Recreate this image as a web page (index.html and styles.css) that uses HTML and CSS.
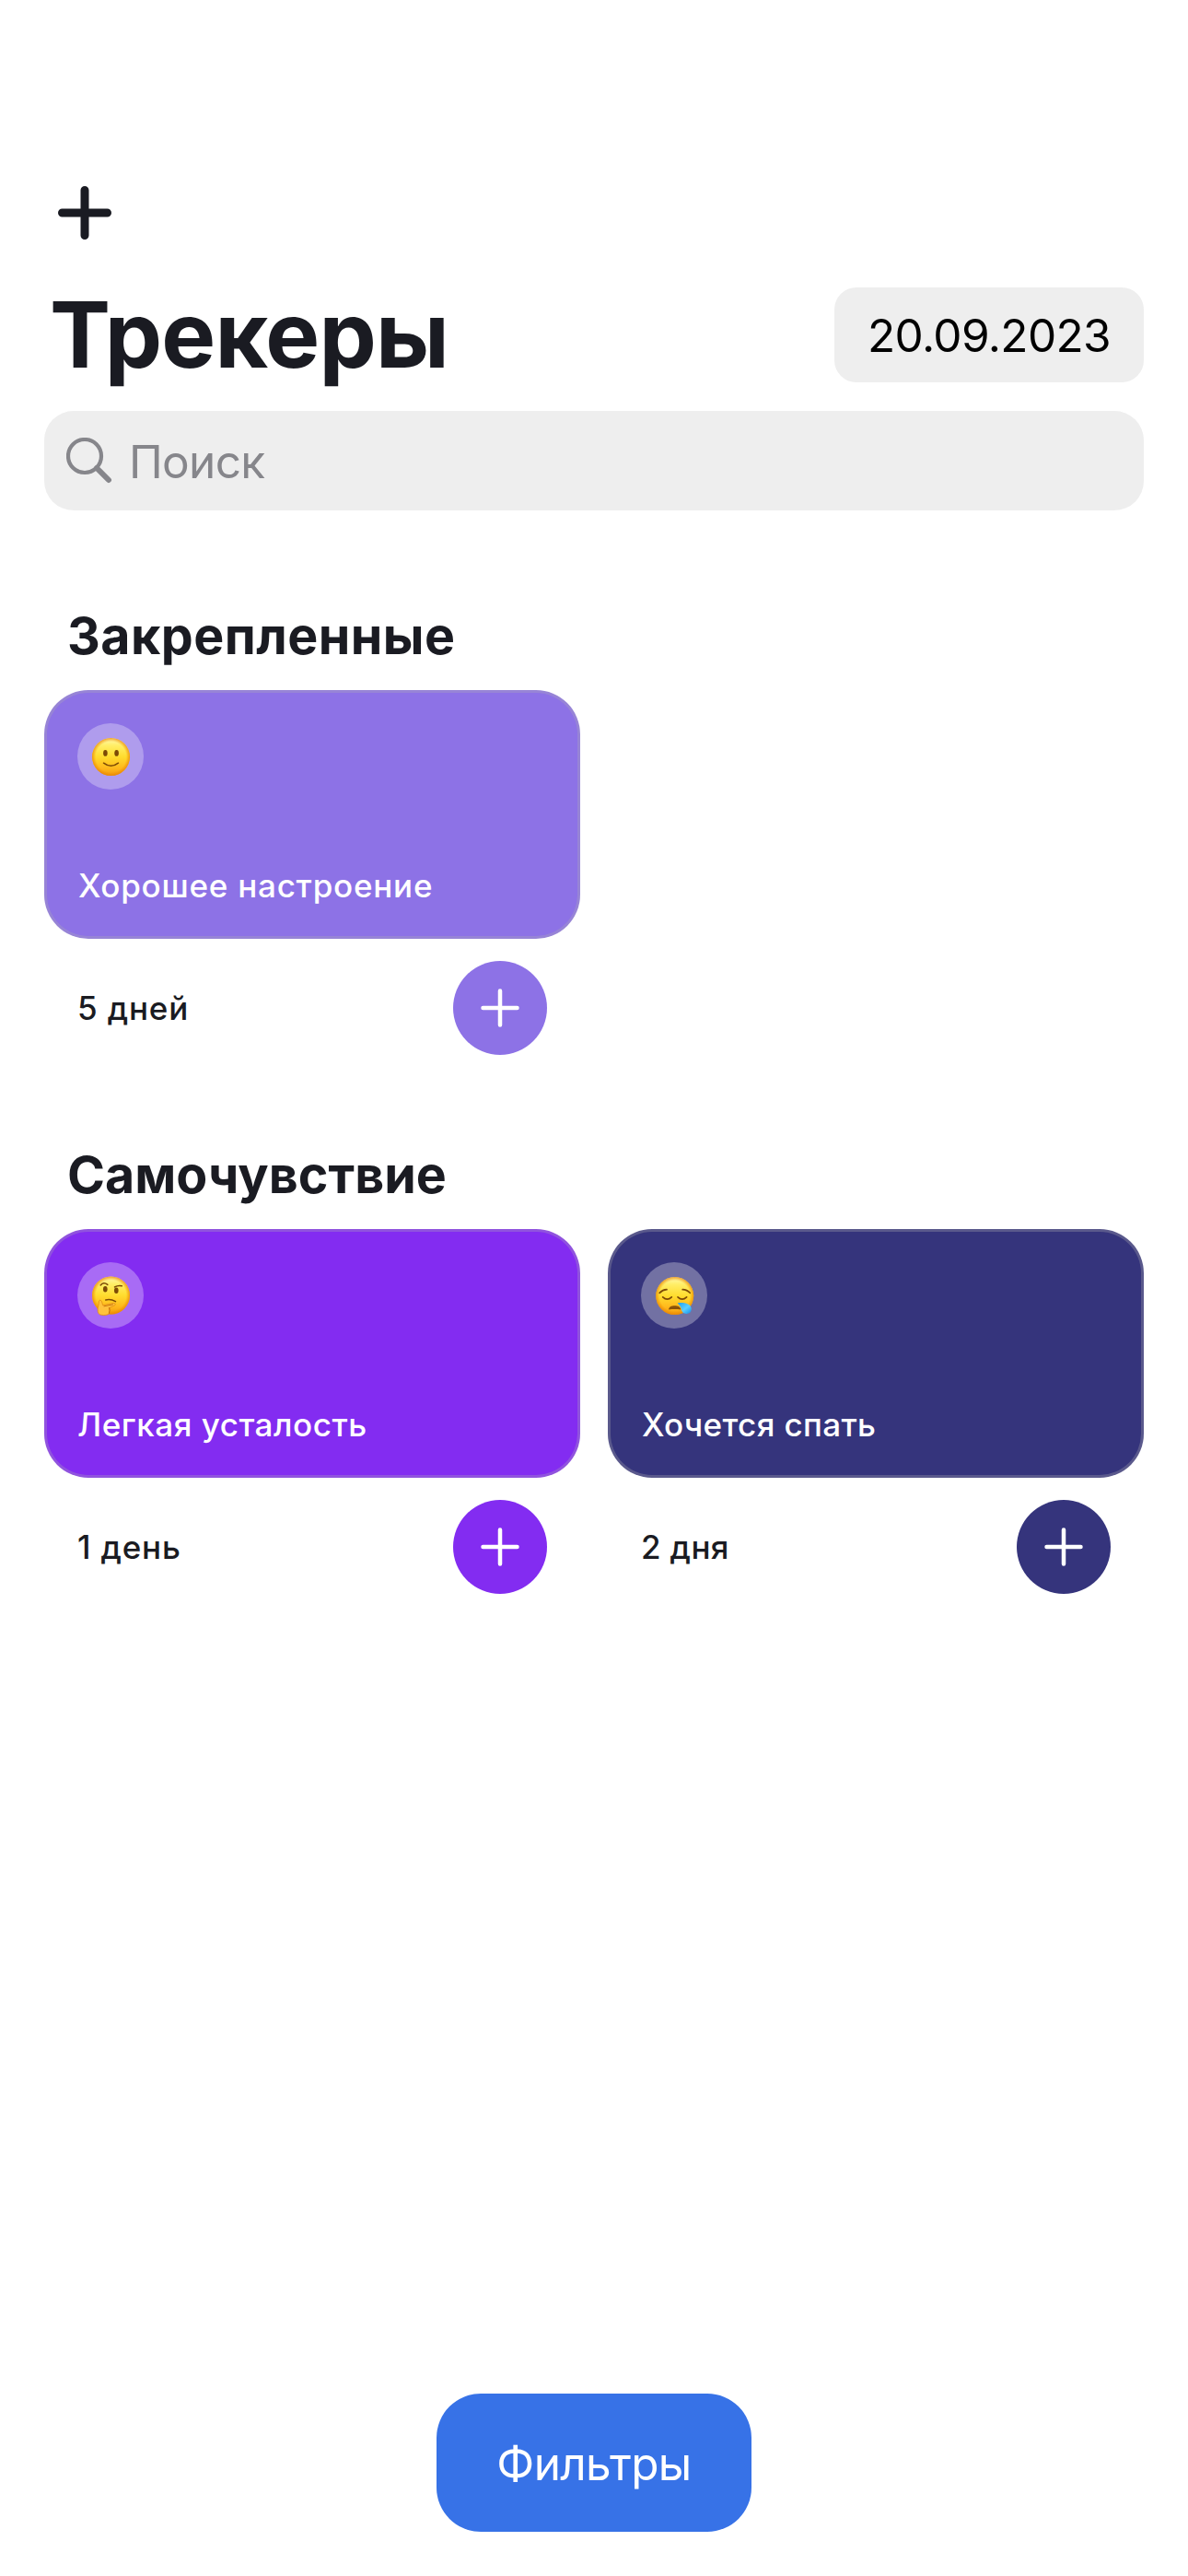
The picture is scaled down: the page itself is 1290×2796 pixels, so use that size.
FILE: index.html
```html
<!DOCTYPE html>
<html lang="ru">
<head>
<meta charset="utf-8">
<title>Трекеры</title>
<link rel="stylesheet" href="styles.css">
</head>
<body>
<main class="screen">
  <header class="header">
    <button class="add" aria-label="Добавить">
      <svg width="58" height="58" viewBox="0 0 58 58"><path d="M29 4.500v49M4.500 29h49" stroke="currentColor" stroke-width="9" stroke-linecap="round"/></svg>
    </button>
    <div class="title-row">
      <h1 class="title">Трекеры</h1>
      <div class="date">20.09.2023</div>
    </div>
    <div class="search">
      <svg width="50" height="50" viewBox="0 0 50 50" fill="none" stroke="currentColor"><circle cx="20" cy="20" r="18" stroke-width="4.200"/><path d="M33 33L46 46" stroke-width="6" stroke-linecap="round"/></svg>
      <span class="placeholder">Поиск</span>
    </div>
  </header>

  <section class="section pinned">
    <h2 class="section-title">Закрепленные</h2>
    <div class="grid">
      <article class="tracker lavender">
        <div class="card">
          <svg class="emoji" viewBox="0 0 72 72" fill="none">
            <defs>
              <linearGradient id="face" x1="0" y1="0" x2="0" y2="1"><stop offset="0" stop-color="#fff9b0"/><stop offset=".2" stop-color="#ffee66"/><stop offset=".5" stop-color="#ffdc2e"/><stop offset=".8" stop-color="#ffb81c"/><stop offset="1" stop-color="#f09a10"/></linearGradient>
              <radialGradient id="rim"><stop offset=".8" stop-color="#f08c00" stop-opacity="0"/><stop offset="1" stop-color="#e88300" stop-opacity=".75"/></radialGradient>
            </defs>
            <circle cx="36.500" cy="36.500" r="20.500" fill="url(#face)"/><circle cx="36.500" cy="36.500" r="20.500" fill="url(#rim)"/>
            <g fill="#7c4a06"><ellipse cx="30.400" cy="32.400" rx="2.300" ry="3.400"/><ellipse cx="42.600" cy="32.400" rx="2.300" ry="3.400"/></g>
            <path d="M28.500 43.200Q36.500 49.500 44.500 43.200" stroke="#7c4a06" stroke-width="1.500" stroke-linecap="round"/>
          </svg>
          <p class="name">Хорошее настроение</p>
        </div>
        <div class="footer"><span class="days">5 дней</span>
          <button class="plus" aria-label="Отметить"><svg width="42" height="42" viewBox="0 0 42 42"><path d="M21 2.500v37M2.500 21h37" stroke="#fff" stroke-width="4.500" stroke-linecap="round"/></svg></button>
        </div>
      </article>
    </div>
  </section>

  <section class="section">
    <h2 class="section-title">Самочувствие</h2>
    <div class="grid">
      <article class="tracker violet">
        <div class="card">
          <svg class="emoji" viewBox="0 0 72 72" fill="none">
            <circle cx="36.500" cy="36" r="20.500" fill="url(#face)"/><circle cx="36.500" cy="36" r="20.500" fill="url(#rim)"/>
            <g fill="#7c4a06"><ellipse cx="30.300" cy="29.300" rx="2.300" ry="3.300"/><ellipse cx="42.300" cy="30.700" rx="2.300" ry="3.200"/></g>
            <g stroke="#7c4a06" stroke-width="1.500" stroke-linecap="round"><path d="M25.200 25Q28.500 20.800 32.800 24.400"/><path d="M40.500 27Q44 25 48.300 25.800"/><path d="M30.800 41Q36 39.600 41.500 42.600"/></g>
            <path d="M24 41.500C25.800 40.300 26.800 43 27.600 46.700C31 46.400 36 44.600 39.600 44.500C41.800 44.500 41.600 46.600 39.800 47.200L35.200 49.200C36.200 51.500 35.600 55.500 33.300 56.700C30.600 57.800 26.600 57.800 24.300 56.800C21.800 55.600 22 51.500 22.300 49.500C22.600 47 23.500 45.500 23.300 42.800Z" fill="#ffc23d" stroke="#e08a10" stroke-width=".8"/>
            <path d="M29 47.800L38.500 45.900M34.500 49.500Q35.500 52 34.400 55.500" stroke="#c26a08" stroke-width=".9" stroke-linecap="round"/>
          </svg>
          <p class="name">Легкая усталость</p>
        </div>
        <div class="footer"><span class="days">1 день</span>
          <button class="plus" aria-label="Отметить"><svg width="42" height="42" viewBox="0 0 42 42"><path d="M21 2.500v37M2.500 21h37" stroke="#fff" stroke-width="4.500" stroke-linecap="round"/></svg></button>
        </div>
      </article>
      <article class="tracker indigo">
        <div class="card">
          <svg class="emoji" viewBox="0 0 72 72" fill="none">
            <defs><linearGradient id="tear" x1="0" y1="0" x2="1" y2="1"><stop offset="0" stop-color="#1d9ff0"/><stop offset=".55" stop-color="#5ccfff"/><stop offset="1" stop-color="#0f8fe8"/></linearGradient></defs>
            <circle cx="36.700" cy="36.500" r="20.500" fill="url(#face)"/><circle cx="36.700" cy="36.500" r="20.500" fill="url(#rim)"/>
            <g stroke="#7c4a06" stroke-width="1.700" stroke-linecap="round"><path d="M20.200 33.300Q23.500 29.800 28 29.700"/><path d="M45.200 29.700Q50 29.800 53.200 33.300"/><path d="M23.700 37.800Q28.500 42.300 33.300 37.800"/><path d="M40 37.800Q44.800 42.300 49.600 37.800"/></g>
            <path d="M30.200 51.500C29.500 45.800 43.500 45.800 43.200 51.500C39 50.900 34.500 50.900 30.200 51.500Z" fill="#8a5208"/>
            <path d="M39.700 44.300C44 43.600 54.800 43.800 54.800 51A5.500 5.500 0 0 1 43.900 51.300C43.600 48.500 41.500 46.500 39.700 44.300Z" fill="url(#tear)"/>
          </svg>
          <p class="name">Хочется спать</p>
        </div>
        <div class="footer"><span class="days">2 дня</span>
          <button class="plus" aria-label="Отметить"><svg width="42" height="42" viewBox="0 0 42 42"><path d="M21 2.500v37M2.500 21h37" stroke="#fff" stroke-width="4.500" stroke-linecap="round"/></svg></button>
        </div>
      </article>
    </div>
  </section>

  <button class="filters">Фильтры</button>
</main>
</body>
</html>
```
FILE: styles.css
```css
* { box-sizing: border-box; margin: 0; padding: 0; }

body {
  background: #fff;
  color: #1a1b22;
  font-family: Inter, "Liberation Sans", sans-serif;
}

button { border: 0; background: none; color: inherit; font: inherit; }
svg { display: block; flex: none; }

.screen {
  display: flex;
  flex-direction: column;
  width: 1290px;
  height: 2796px;
  padding: 202px 48px 48px;
}

.header { display: flex; flex-direction: column; }
.add { align-self: flex-start; margin-left: 15px; }

.title-row {
  display: flex;
  align-items: center;
  justify-content: space-between;
  margin-top: 52px;
  height: 103px;
}
.title {
  padding-left: 6px;
  font-size: 99px;
  font-weight: 700;
  line-height: 103px;
  letter-spacing: -.78px;
}
.date {
  display: flex;
  align-items: center;
  justify-content: center;
  width: 336px;
  height: 103px;
  border-radius: 24px;
  background: #eee;
  color: #000;
  font-size: 49.5px;
  letter-spacing: -.63px;
}

.search {
  display: flex;
  align-items: center;
  gap: 18px;
  height: 108px;
  margin-top: 31px;
  padding-left: 24px;
  border-radius: 32px;
  background: #eee;
  color: #86868b;
  font-size: 49.5px;
  letter-spacing: -.7px;
}
.placeholder { padding-top: 2px; }

.section-title {
  padding-left: 25px;
  font-size: 55.5px;
  font-weight: 700;
  line-height: 66px;
}
.section { margin-top: 97px; }
.section.pinned { margin-top: 103px; }
.pinned .section-title { letter-spacing: .46px; }
.grid {
  display: grid;
  grid-template-columns: 1fr 1fr;
  gap: 30px;
  margin-top: 26px;
}

.lavender { --tone: #8d72e6; --name-spacing: .76px; --days-spacing: .85px; }
.violet { --tone: #832cf1; --name-spacing: .53px; --days-spacing: .8px; }
.indigo { --tone: #35347c; --name-spacing: .37px; --days-spacing: .35px; }

.card {
  display: flex;
  flex-direction: column;
  justify-content: space-between;
  height: 270px;
  padding: 33px 33px 31px;
  border: 3px solid rgba(174, 175, 180, .3);
  border-radius: 48px;
  background: var(--tone) border-box;
  color: #fff;
}
.emoji { width: 72px; height: 72px; border-radius: 50%; background: rgba(255, 255, 255, .3); }
.name {
  padding-left: 1px;
  font-size: 35px;
  font-weight: 500;
  line-height: 48px;
  letter-spacing: var(--name-spacing);
}
.violet .name { padding-left: 0; }

.footer {
  display: flex;
  align-items: center;
  justify-content: space-between;
  height: 102px;
  margin-top: 24px;
  padding: 0 36px;
  font-size: 35px;
  font-weight: 500;
}
.days { letter-spacing: var(--days-spacing); }
.plus {
  display: grid;
  place-items: center;
  width: 102px;
  height: 102px;
  border-radius: 50%;
  background: var(--tone);
}

.filters {
  align-self: center;
  width: 342px;
  height: 150px;
  margin-top: auto;
  padding-top: 2px;
  border-radius: 48px;
  background: #3772e7;
  color: #fff;
  font-size: 49.5px;
  letter-spacing: -.67px;
}
```
